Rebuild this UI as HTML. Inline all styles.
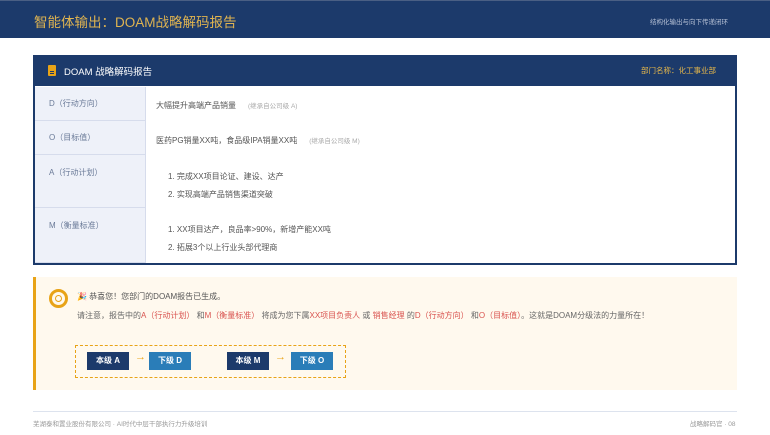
<!DOCTYPE html>
<html><head><meta charset="utf-8"><style>
*{margin:0;padding:0;box-sizing:border-box}
body{width:770px;height:435px;background:#fff;font-family:"Liberation Sans","Noto Sans CJK SC",sans-serif;position:relative;overflow:hidden;color:#555}
.top{position:absolute;left:0;top:0;width:770px;height:38px;background:#1c3a6b;border-top:1px solid #4a5f84}
.top .t{position:absolute;left:34px;top:10px;color:#e0b450;font-size:13.5px}
.top .r{position:absolute;left:650px;top:15px;color:#b8c2d6;font-size:6.5px}
.card{position:absolute;left:33px;top:55px;width:704px;height:210px;border:2px solid #1c3a6b;border-top:none;background:#fff}
.ch{position:absolute;left:0;top:0;width:700px;height:31px;background:#1c3a6b}
.ch .t{position:absolute;left:29px;top:9px;color:#fff;font-size:9.5px}
.ch .r{position:absolute;left:606px;top:10px;color:#e8b84a;font-size:7.5px}
.ic{position:absolute;left:13px;top:10px;width:8px;height:11px;background:#e8a317;border-radius:1px}
.ic:after{content:"";position:absolute;left:2px;top:6px;width:4px;height:1px;background:#1c3a6b;box-shadow:0 2px 0 #1c3a6b}
.lc{position:absolute;left:0;width:111px;background:#eef1f9;border-bottom:1px solid #d6dcec;border-right:1px solid #d6dcec;font-size:8px;color:#6a7a98;padding-left:14px}
.rc{position:absolute;left:121px;font-size:8px;color:#555}
.rc small{font-size:6.5px;color:#aaa;margin-left:12px}
.call{position:absolute;left:33px;top:277px;width:704px;height:113px;background:#fff9ee;border-left:3px solid #e8a317}
.ring{position:absolute;left:13px;top:12px;width:19px;height:19px;border:3.5px solid #e8a317;border-radius:50%}
.ring:after{content:"";position:absolute;left:2.5px;top:2.5px;width:5px;height:5px;border:1.5px solid #e8a317;border-radius:50%}
.l1{position:absolute;left:41px;top:14px;font-size:8px;color:#555}
.l2{position:absolute;left:41px;top:33px;font-size:8px;color:#666;white-space:nowrap}
.red{color:#d9534f}
.dash{position:absolute;left:39px;top:68px;width:271px;height:33px;border:1.5px dashed #e8a317}
.b{position:absolute;top:6px;height:18px;width:42px;color:#fff;font-size:8px;font-weight:bold;text-align:center;line-height:18px}
.n{background:#1c3a6b}.s{background:#2a7db8}
.ar{position:absolute;top:5px;color:#e8a317;font-size:11px;font-weight:bold}
.fl{position:absolute;left:33px;top:411px;width:704px;height:1px;background:#dde3ee}
.ft{position:absolute;top:418px;font-size:6.5px;color:#999}
</style></head><body>
<div class="top"><div class="t">智能体输出：DOAM战略解码报告</div><div class="r">结构化输出与向下传递闭环</div></div>
<div class="card">
<div class="ch"><div class="ic"></div><div class="t">DOAM 战略解码报告</div><div class="r">部门名称：化工事业部</div></div>
<div class="lc" style="top:32px;height:34px;line-height:34px">D（行动方向）</div>
<div class="lc" style="top:66px;height:34px;line-height:34px">O（目标值）</div>
<div class="lc" style="top:100px;height:53px;line-height:36px">A（行动计划）</div>
<div class="lc" style="top:153px;height:55px;line-height:36px">M（衡量标准）</div>
<div class="rc" style="top:45px">大幅提升高端产品销量<small>(继承自公司级 A)</small></div>
<div class="rc" style="top:80px">医药PG销量XX吨，食品级IPA销量XX吨<small>(继承自公司级 M)</small></div>
<div class="rc" style="top:113px;left:133px;line-height:18px">1. 完成XX项目论证、建设、达产<br>2. 实现高端产品销售渠道突破</div>
<div class="rc" style="top:166px;left:133px;line-height:18px">1. XX项目达产，良品率&gt;90%，新增产能XX吨<br>2. 拓展3个以上行业头部代理商</div>
</div>
<div class="call">
<div class="ring"></div>
<div class="l1">🎉 恭喜您！您部门的DOAM报告已生成。</div>
<div class="l2">请注意，报告中的<span class="red">A（行动计划）</span> 和<span class="red">M（衡量标准）</span> 将成为您下属<span class="red">XX项目负责人</span> 或 <span class="red">销售经理</span> 的<span class="red">D（行动方向）</span> 和<span class="red">O（目标值）</span>。这就是DOAM分级法的力量所在！</div>
<div class="dash">
<div class="b n" style="left:11px">本级 A</div><div class="ar" style="left:59px">→</div><div class="b s" style="left:73px">下级 D</div>
<div class="b n" style="left:151px">本级 M</div><div class="ar" style="left:199px">→</div><div class="b s" style="left:215px">下级 O</div>
</div>
</div>
<div class="fl"></div>
<div class="ft" style="left:33px">芜湖泰和置业股份有限公司 · AI时代中层干部执行力升级培训</div>
<div class="ft" style="left:690px">战略解码官 · 08</div>
</body></html>
